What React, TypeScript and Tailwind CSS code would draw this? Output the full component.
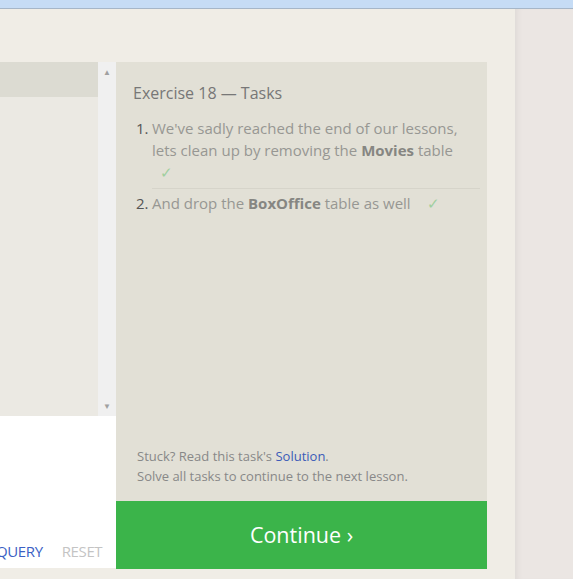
import { ReactNode } from 'react';

function Check() {
  return <span className="ml-3 text-[#9fcf9f]">✓</span>;
}

function Task({ n, children, last }: { n: number; children: ReactNode; last?: boolean }) {
  return (
    <li className="flex">
      <span className={`w-[16px] shrink-0 text-[#555] ${last ? 'pt-[3px]' : ''}`}>{n}.</span>
      <span className={`flex-1 ${last ? 'pt-[3px]' : 'border-b border-[#d6d4ca] pb-[5px]'}`}>{children}</span>
    </li>
  );
}

export default function App() {
  return (
    <div
      className="relative h-[579px] w-[573px] overflow-hidden bg-[#f0ede6]"
      style={{ fontFamily: '"Open Sans", "Noto Sans", sans-serif' }}
    >
      <div className="h-[9px] border-b border-[#a6b6c8] bg-[#c6dcf5]" />
      <div className="flex h-[570px]">
        <div className="flex w-[515px] pt-[53px]">
          {/* editor column */}
          <div className="flex w-[116px] flex-col">
            <div className="flex h-[354px]">
              <div className="flex w-[98px] flex-col bg-[#ebe9e3]">
                <div className="h-[35px] bg-[#dcdbd2]" />
              </div>
              <div className="flex w-[18px] flex-col items-center justify-between bg-[#f0f0f0] py-[6px] text-[8px] leading-none text-[#a0a0a0]">
                <span>▲</span>
                <span>▼</span>
              </div>
            </div>
            <div className="flex h-[152px] items-end bg-white pb-[6px] text-[15px] tracking-tight">
              <span className="-ml-[4px] text-[#3b5fc4]">QUERY</span>
              <span className="ml-[19px] text-[#c4c4c4]">RESET</span>
            </div>
          </div>
          {/* tasks column */}
          <div className="flex w-[371px] flex-col">
            <div className="flex h-[439px] flex-col bg-[#e2e0d6] pl-[17px] pr-[7px] pt-[20px] pb-[15px]">
              <h3 className="text-[16px] leading-[22px] text-[#777]">Exercise 18 — Tasks</h3>
              <ol className="mt-[13px] ml-[3px] text-[15px] leading-[22px] text-[#979793]">
                <Task n={1}>
                  We've sadly reached the end of our lessons,
                  <br />
                  lets clean up by removing the <b className="font-bold text-[#868682]">Movies</b> table
                  <br />
                  <span className="ml-[-4px]"><Check /></span>
                </Task>
                <Task n={2} last>
                  And drop the <b className="font-bold text-[#868682]">BoxOffice</b> table as well <Check />
                </Task>
              </ol>
              <div className="mt-auto pl-[4px] text-[13px] leading-[20px] text-[#888]">
                <p>
                  Stuck? Read this task's <span className="text-[#3b5bb8]">Solution</span>.
                </p>
                <p>Solve all tasks to continue to the next lesson.</p>
              </div>
            </div>
            <div className="flex h-[68px] items-center justify-center bg-[#3bb44a] text-[21.5px] text-white">
              Continue ›
            </div>
          </div>
        </div>
        <div className="flex-1 bg-[#ebe6e3] shadow-[inset_6px_0_6px_-4px_rgba(0,0,0,0.06)]" />
      </div>
    </div>
  );
}
